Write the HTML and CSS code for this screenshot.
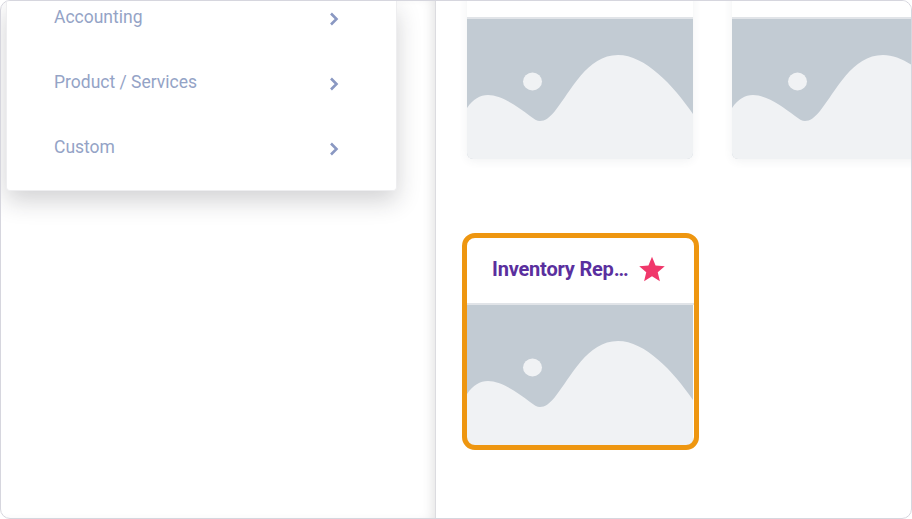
FILE: index.html
```html
<!DOCTYPE html>
<html lang="en">
<head>
    <meta charset="UTF-8">
    <meta name="viewport" content="width=device-width, initial-scale=1.0">
    <title>Reports</title>
    <link rel="stylesheet" href="styles.css">
</head>
<body>
    <div class="frame">
        <aside class="sidebar">
            <ul class="menu">
                <li class="menu-item">
                    <span>Accounting</span>
                    <svg class="chevron" viewBox="0 0 10 14"><path d="M2 1.5L7.500 7 2 12.500"/></svg>
                </li>
                <li class="menu-item">
                    <span>Product / Services</span>
                    <svg class="chevron" viewBox="0 0 10 14"><path d="M2 1.5L7.500 7 2 12.500"/></svg>
                </li>
                <li class="menu-item">
                    <span>Custom</span>
                    <svg class="chevron" viewBox="0 0 10 14"><path d="M2 1.5L7.500 7 2 12.500"/></svg>
                </li>
            </ul>
        </aside>
        <main class="content">
            <div class="card-grid">
                <div class="card">
                    <div class="card-head"></div>
                    <svg class="thumb" viewBox="0 0 226 140">
                        <ellipse cx="65.5" cy="62.5" rx="9.5" ry="9"/>
                        <path d="M0 89C6 80 13 76 21 76C34 76 50 87 63 97C67 100 70 102 73 102C78 102 82 99 88 92C104 72 120 36 151 36C178 36 206 66 226 95V140H0Z"/>
                    </svg>
                </div>
                <div class="card">
                    <div class="card-head"></div>
                    <svg class="thumb" viewBox="0 0 226 140">
                        <ellipse cx="65.5" cy="62.5" rx="9.5" ry="9"/>
                        <path d="M0 89C6 80 13 76 21 76C34 76 50 87 63 97C67 100 70 102 73 102C78 102 82 99 88 92C104 72 120 36 151 36C178 36 206 66 226 95V140H0Z"/>
                    </svg>
                </div>
                <div class="card card-selected">
                    <div class="card-head">
                        <span class="card-title">Inventory Report</span>
                        <svg class="star" viewBox="0 0 24 24"><path d="M12 .8l3.3 7.9 8.5.7-6.5 5.6 2 8.3L12 18.8l-7.300 4.500 2-8.300L.2 9.400l8.500-.7z"/></svg>
                    </div>
                    <svg class="thumb" viewBox="0 0 226 140">
                        <ellipse cx="65.5" cy="62.5" rx="9.5" ry="9"/>
                        <path d="M0 89C6 80 13 76 21 76C34 76 50 87 63 97C67 100 70 102 73 102C78 102 82 99 88 92C104 72 120 36 151 36C178 36 206 66 226 95V140H0Z"/>
                    </svg>
                </div>
            </div>
        </main>
    </div>
</body>
</html>
```

FILE: styles.css
```css
* {
    box-sizing: border-box;
}

body {
    margin: 0;
    font-family: Roboto, Arial, sans-serif;
    background: #ffffff;
}

.frame {
    display: flex;
    width: 912px;
    height: 519px;
    overflow: hidden;
    border: 1px solid #d6d6de;
    border-radius: 10px;
    background: #ffffff;
}

.sidebar {
    width: 435px;
    flex-shrink: 0;
    padding-left: 5px;
    border-right: 1px solid #dcdce0;
    box-shadow: inset -8px 0 12px -6px rgba(0, 0, 0, 0.12);
}

.menu {
    display: flow-root;
    width: 391px;
    height: 190px;
    margin: 0;
    padding: 0 57px 0 47px;
    list-style: none;
    background: #ffffff;
    border-radius: 0 0 4px 4px;
    box-shadow: 0 10px 24px rgba(30, 30, 40, 0.2);
    border: 1px solid #eeeef0;
    border-top: 0;
}

.menu-item {
    display: flex;
    align-items: center;
    justify-content: space-between;
    height: 65px;
    font-size: 17.5px;
    color: #94a3c6;
}

.menu-item:first-child {
    margin-top: -17px;
}

.chevron {
    width: 10px;
    height: 14px;
    margin-top: 4px;
    fill: none;
    stroke: #8a98c2;
    stroke-width: 2.6;
}

.content {
    flex: 1;
    min-width: 0;
    padding-left: 31px;
}

.card-grid {
    display: grid;
    grid-template-columns: repeat(2, 226px);
    gap: 79px 39px;
    margin-top: -49px;
}

.card {
    background: #ffffff;
    border-radius: 6px;
    box-shadow: 0 2px 10px rgba(60, 70, 90, 0.07);
}

.card-selected {
    width: 227px;
    border-radius: 8px;
    box-shadow: none;
    outline: 5px solid #ee9610;
}

.card-head {
    display: flex;
    align-items: center;
    height: 67px;
    padding: 0 28px 4px 25px;
    border-bottom: 2px solid #e1e4e8;
}

.card-title {
    width: 137px;
    overflow: hidden;
    white-space: nowrap;
    text-overflow: ellipsis;
    font-size: 20px;
    font-weight: 700;
    letter-spacing: -0.2px;
    color: #5a2f9e;
}

.star {
    width: 26px;
    height: 26px;
    margin-left: 10px;
    fill: #f0386b;
}

.thumb {
    display: block;
    width: 226px;
    height: 140px;
    border-radius: 0 0 6px 6px;
    background: #c2cbd3;
    fill: #f0f2f4;
}
```
